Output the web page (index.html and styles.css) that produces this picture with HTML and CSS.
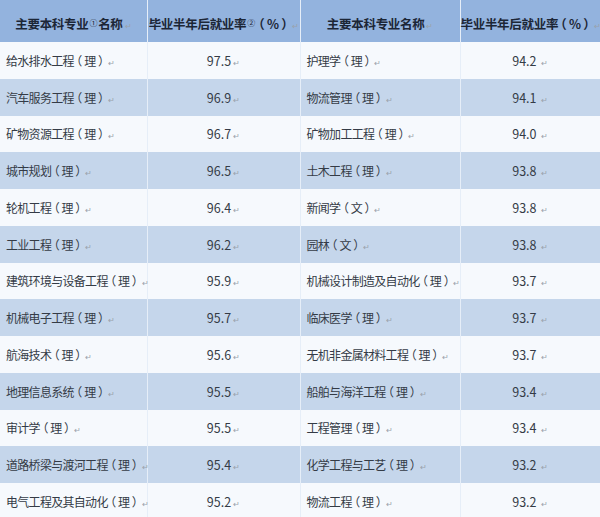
FILE: index.html
```html
<!DOCTYPE html>
<html lang="zh">
<head>
<meta charset="utf-8">
<link rel="stylesheet" href="styles.css">
</head>
<body>
<table class="tbl">
  <colgroup>
    <col class="c1"><col class="c2"><col class="c3"><col class="c4">
  </colgroup>
  <thead>
    <tr class="head">
      <th>主要本科专业<span class="sup">①</span>名称<span class="rm">↵</span></th>
      <th>毕业半年后就业率<span class="sup">②</span><span class="p">（</span>%<span class="p">）</span><span class="rm">↵</span></th>
      <th>主要本科专业名称<span class="rm">↵</span></th>
      <th>毕业半年后就业率<span class="p">（</span>%<span class="p">）</span><span class="rm">↵</span></th>
    </tr>
  </thead>
  <tbody>
    <tr><td class="name">给水排水工程<span class="p">（</span>理<span class="p">）</span><span class="rm">↵</span></td><td class="num">97.5<span class="rm">↵</span></td><td class="name">护理学<span class="p">（</span>理<span class="p">）</span><span class="rm">↵</span></td><td class="num">94.2 <span class="rm">↵</span></td></tr>
    <tr><td class="name">汽车服务工程<span class="p">（</span>理<span class="p">）</span><span class="rm">↵</span></td><td class="num">96.9<span class="rm">↵</span></td><td class="name">物流管理<span class="p">（</span>理<span class="p">）</span><span class="rm">↵</span></td><td class="num">94.1 <span class="rm">↵</span></td></tr>
    <tr><td class="name">矿物资源工程<span class="p">（</span>理<span class="p">）</span><span class="rm">↵</span></td><td class="num">96.7<span class="rm">↵</span></td><td class="name">矿物加工工程<span class="p">（</span>理<span class="p">）</span><span class="rm">↵</span></td><td class="num">94.0 <span class="rm">↵</span></td></tr>
    <tr><td class="name">城市规划<span class="p">（</span>理<span class="p">）</span><span class="rm">↵</span></td><td class="num">96.5<span class="rm">↵</span></td><td class="name">土木工程<span class="p">（</span>理<span class="p">）</span><span class="rm">↵</span></td><td class="num">93.8 <span class="rm">↵</span></td></tr>
    <tr><td class="name">轮机工程<span class="p">（</span>理<span class="p">）</span><span class="rm">↵</span></td><td class="num">96.4<span class="rm">↵</span></td><td class="name">新闻学<span class="p">（</span>文<span class="p">）</span><span class="rm">↵</span></td><td class="num">93.8 <span class="rm">↵</span></td></tr>
    <tr><td class="name">工业工程<span class="p">（</span>理<span class="p">）</span><span class="rm">↵</span></td><td class="num">96.2<span class="rm">↵</span></td><td class="name">园林<span class="p">（</span>文<span class="p">）</span><span class="rm">↵</span></td><td class="num">93.8 <span class="rm">↵</span></td></tr>
    <tr><td class="name">建筑环境与设备工程<span class="p">（</span>理<span class="p">）</span><span class="rm">↵</span></td><td class="num">95.9<span class="rm">↵</span></td><td class="name">机械设计制造及自动化<span class="p">（</span>理<span class="p">）</span><span class="rm">↵</span></td><td class="num">93.7 <span class="rm">↵</span></td></tr>
    <tr><td class="name">机械电子工程<span class="p">（</span>理<span class="p">）</span><span class="rm">↵</span></td><td class="num">95.7<span class="rm">↵</span></td><td class="name">临床医学<span class="p">（</span>理<span class="p">）</span><span class="rm">↵</span></td><td class="num">93.7 <span class="rm">↵</span></td></tr>
    <tr><td class="name">航海技术<span class="p">（</span>理<span class="p">）</span><span class="rm">↵</span></td><td class="num">95.6<span class="rm">↵</span></td><td class="name">无机非金属材料工程<span class="p">（</span>理<span class="p">）</span><span class="rm">↵</span></td><td class="num">93.7 <span class="rm">↵</span></td></tr>
    <tr><td class="name">地理信息系统<span class="p">（</span>理<span class="p">）</span><span class="rm">↵</span></td><td class="num">95.5<span class="rm">↵</span></td><td class="name">船舶与海洋工程<span class="p">（</span>理<span class="p">）</span><span class="rm">↵</span></td><td class="num">93.4 <span class="rm">↵</span></td></tr>
    <tr><td class="name">审计学<span class="p">（</span>理<span class="p">）</span><span class="rm">↵</span></td><td class="num">95.5<span class="rm">↵</span></td><td class="name">工程管理<span class="p">（</span>理<span class="p">）</span><span class="rm">↵</span></td><td class="num">93.4 <span class="rm">↵</span></td></tr>
    <tr><td class="name">道路桥梁与渡河工程<span class="p">（</span>理<span class="p">）</span><span class="rm">↵</span></td><td class="num">95.4<span class="rm">↵</span></td><td class="name">化学工程与工艺<span class="p">（</span>理<span class="p">）</span><span class="rm">↵</span></td><td class="num">93.2 <span class="rm">↵</span></td></tr>
    <tr><td class="name">电气工程及其自动化<span class="p">（</span>理<span class="p">）</span><span class="rm">↵</span></td><td class="num">95.2<span class="rm">↵</span></td><td class="name">物流工程<span class="p">（</span>理<span class="p">）</span><span class="rm">↵</span></td><td class="num">93.2 <span class="rm">↵</span></td></tr>
  </tbody>
</table>
</body>
</html>
```

FILE: styles.css
```css
html, body {
  margin: 0;
  padding: 0;
  background: #f6f9fd;
}
body {
  font-family: "Noto Sans CJK SC", "Noto Sans", sans-serif;
  color: #343b46;
  font-size: 12px;
  overflow: hidden;
}
.tbl {
  width: 600px;
  table-layout: fixed;
  border-collapse: collapse;
  border-spacing: 0;
}
.c1 { width: 147px; }
.c2 { width: 153px; }
.c3 { width: 160px; }
.c4 { width: 140px; }
.tbl th, .tbl td {
  padding: 0;
  white-space: nowrap;
  overflow: visible;
  border-left: 1px solid #e6eef8;
}
.tbl th:first-child, .tbl td:first-child {
  border-left: none;
}
.head {
  height: 42px;
  background: #93b3de;
}
.head th {
  font-weight: bold;
  font-size: 12.5px;
  color: #1c2636;
  text-align: center;
  vertical-align: middle;
  padding-top: 5px;
  letter-spacing: -0.3px;
}
.tbl tbody tr {
  height: 36.75px;
  background: #f6f9fd;
}
.tbl tbody tr:nth-child(even) {
  background: #c5d6eb;
}
.name {
  text-align: left;
  padding-left: 6px !important;
  letter-spacing: -0.7px;
}
.num {
  text-align: center;
  font-size: 12.5px;
}
.p {
  font-feature-settings: "halt";
  padding: 0 2.5px;
}
.sup {
  font-size: 8px;
  vertical-align: 3px;
  font-weight: normal;
  margin: 0 1px;
}
.rm {
  color: #9aa2ac;
  font-size: 8px;
  font-weight: normal;
  margin-left: 2px;
}
```
